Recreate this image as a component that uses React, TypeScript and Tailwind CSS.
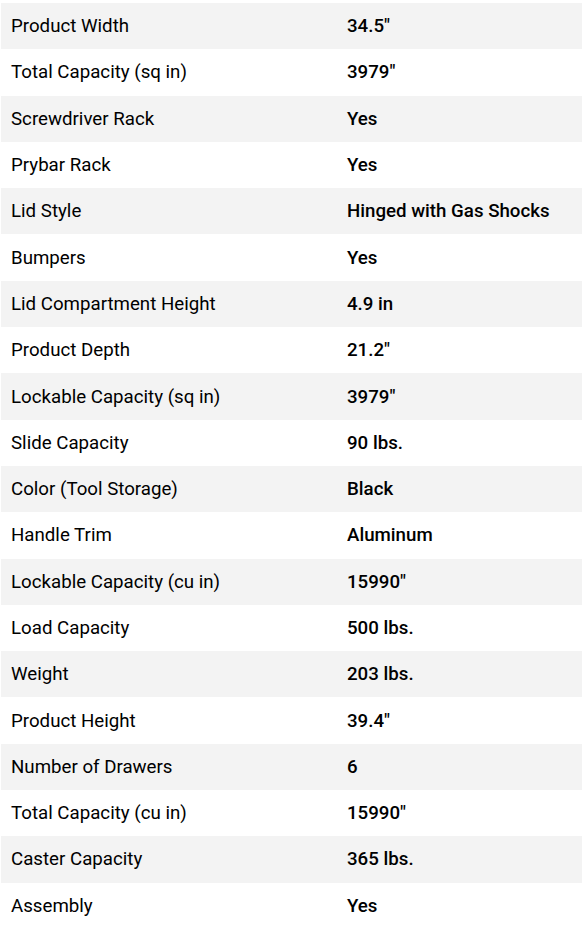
const specs: [string, string][] = [
  ['Product Width', '34.5"'],
  ['Total Capacity (sq in)', '3979"'],
  ['Screwdriver Rack', 'Yes'],
  ['Prybar Rack', 'Yes'],
  ['Lid Style', 'Hinged with Gas Shocks'],
  ['Bumpers', 'Yes'],
  ['Lid Compartment Height', '4.9 in'],
  ['Product Depth', '21.2"'],
  ['Lockable Capacity (sq in)', '3979"'],
  ['Slide Capacity', '90 lbs.'],
  ['Color (Tool Storage)', 'Black'],
  ['Handle Trim', 'Aluminum'],
  ['Lockable Capacity (cu in)', '15990"'],
  ['Load Capacity', '500 lbs.'],
  ['Weight', '203 lbs.'],
  ['Product Height', '39.4"'],
  ['Number of Drawers', '6'],
  ['Total Capacity (cu in)', '15990"'],
  ['Caster Capacity', '365 lbs.'],
  ['Assembly', 'Yes'],
];

export default function App() {
  return (
    <div className="bg-white pt-[3px] pl-[1px] font-['Roboto',sans-serif] text-black">
      {specs.map(([label, value], i) => (
        <div
          key={label}
          className={`grid h-[46.3px] grid-cols-[336px_1fr] items-center text-[18.7px] ${
            i % 2 === 0 ? 'bg-[#f3f3f3]' : 'bg-white'
          }`}
        >
          <div className="pl-[10px]">{label}</div>
          <div className="pl-[10px] font-medium">{value}</div>
        </div>
      ))}
    </div>
  );
}
